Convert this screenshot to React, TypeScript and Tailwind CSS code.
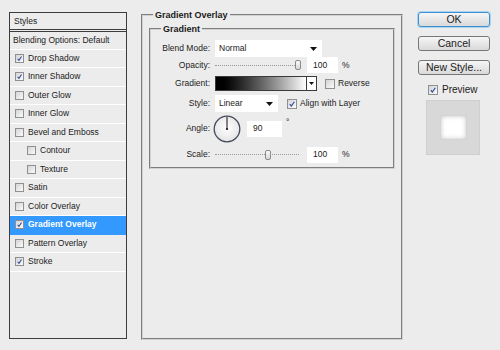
import React from 'react'

// Photoshop "Layer Style" dialog — Gradient Overlay page.
const STYLE_ROWS: { label: string; checked: boolean; indent?: boolean; active?: boolean }[] = [
  { label: 'Drop Shadow', checked: true },
  { label: 'Inner Shadow', checked: true },
  { label: 'Outer Glow', checked: false },
  { label: 'Inner Glow', checked: false },
  { label: 'Bevel and Emboss', checked: false },
  { label: 'Contour', checked: false, indent: true },
  { label: 'Texture', checked: false, indent: true },
  { label: 'Satin', checked: false },
  { label: 'Color Overlay', checked: false },
  { label: 'Gradient Overlay', checked: true, active: true },
  { label: 'Pattern Overlay', checked: false },
  { label: 'Stroke', checked: true },
]

function Checkbox({ checked, className = '' }: { checked: boolean; className?: string }) {
  return (
    <span
      className={`inline-flex shrink-0 items-center justify-center border border-[#8f9090] bg-gradient-to-br from-[#d4d4d6] to-[#fbfbfb] ${className}`}
    >
      {checked && (
        <svg viewBox="0 0 10 10" className="h-full w-full">
          <path d="M2.3 5.3 L4.2 7.6 L7.9 2.2" stroke="#2b4a9c" strokeWidth="1.5" fill="none" />
        </svg>
      )}
    </span>
  )
}

function Arrow() {
  return (
    <svg width="7" height="4" viewBox="0 0 7 4">
      <path d="M0 0 H7 L3.5 4 Z" fill="#111" />
    </svg>
  )
}

function Select({ value, className = '' }: { value: string; className?: string }) {
  return (
    <div className={`flex h-[17px] items-center justify-between bg-white pl-[4px] pr-[5px] ${className}`}>
      <span>{value}</span>
      <Arrow />
    </div>
  )
}

function Slider({ pos }: { pos: number }) {
  return (
    <div className="relative flex h-[12px] w-[84px] items-center">
      <div className="h-px w-full border-t border-dotted border-[#9a9a9a]" />
      <div
        className="absolute top-[1px] h-[10px] w-[6px] rounded-[2px] border border-[#8a8a8a] bg-gradient-to-b from-[#fafafa] to-[#d6d6d6]"
        style={{ left: pos }}
      />
    </div>
  )
}

function NumField({ value, className = '' }: { value: string; className?: string }) {
  return (
    <div className={`flex h-[16px] items-center bg-white pl-[6px] ${className}`}>{value}</div>
  )
}

function StyleList() {
  return (
    <div className="ml-[9px] mt-[12px] flex h-[327px] w-[118px] flex-col border border-[#3d3d3d] bg-[#ececec]">
      <div className="flex h-[19px] shrink-0 items-center border-b-[3px] border-double border-[#3d3d3d] pl-[4px]">
        Styles
      </div>
      <div className="flex h-[17.5px] shrink-0 items-center border-b border-white pl-[3px]">
        Blending Options: Default
      </div>
      {STYLE_ROWS.map(r => (
        <div
          key={r.label}
          className={`flex h-[18.5px] shrink-0 items-center gap-[4px] border-b ${
            r.active ? 'border-[#3399ff] bg-[#3399ff] font-bold text-white' : 'border-white'
          } ${r.indent ? 'pl-[17px]' : 'pl-[5px]'}`}
        >
          <Checkbox checked={r.checked} className="h-[9px] w-[9px]" />
          <span>{r.label}</span>
        </div>
      ))}
    </div>
  )
}

function Row({ label, className = '', children }: { label: string; className?: string; children: React.ReactNode }) {
  return (
    <div className={`flex items-center ${className}`}>
      <div className="w-[59px] shrink-0 text-right">{label}</div>
      <div className="ml-[5px] flex items-center">{children}</div>
    </div>
  )
}

function GradientPanel() {
  return (
    <fieldset className="ml-[14px] mt-[10px] h-[330px] w-[262px] border-2 border-[#d2d2d2] px-[6px] [border-style:groove]">
      <legend className="ml-[4px] px-[2px] text-[9px] font-bold leading-[10px]">Gradient Overlay</legend>
      <fieldset className="mt-[4px] h-[145px] border-2 border-[#d2d2d2] [border-style:groove]">
        <legend className="ml-[10px] px-[2px] text-[9px] font-bold leading-[10px]">Gradient</legend>

        <Row label="Blend Mode:" className="mt-[6px] h-[17px]">
          <Select value="Normal" className="w-[107px]" />
        </Row>

        <Row label="Opacity:" className="h-[16px]">
          <Slider pos={80} />
          <NumField value="100" className="ml-[8px] w-[31px]" />
          <span className="ml-[4px]">%</span>
        </Row>

        <Row label="Gradient:" className="mt-[3px] h-[15px]">
          <div className="flex h-[15px] w-[102px] border border-[#3a3a3a]">
            <div className="h-full flex-1 bg-gradient-to-r from-black to-white" />
            <div className="flex w-[10px] items-center justify-center border-l border-[#3a3a3a] bg-white">
              <svg width="5" height="3" viewBox="0 0 5 3">
                <path d="M0 0 H5 L2.5 3 Z" fill="#111" />
              </svg>
            </div>
          </div>
          <Checkbox checked={false} className="ml-[8px] h-[10px] w-[10px]" />
          <span className="ml-[3px]">Reverse</span>
        </Row>

        <Row label="Style:" className="mt-[4px] h-[17px]">
          <Select value="Linear" className="w-[63px]" />
          <Checkbox checked className="ml-[9px] h-[10px] w-[10px]" />
          <span className="ml-[3px]">Align with Layer</span>
        </Row>

        <Row label="Angle:" className="mt-[3px] h-[27px]">
          <svg width="28" height="28" viewBox="0 0 28 28" className="-ml-[2px]">
            <defs>
              <radialGradient id="dial" cx="50%" cy="45%" r="60%">
                <stop offset="0%" stopColor="#ffffff" />
                <stop offset="100%" stopColor="#e2e2e2" />
              </radialGradient>
            </defs>
            <circle cx="14" cy="14" r="12.8" fill="url(#dial)" stroke="#434a5a" strokeWidth="1.3" />
            <line x1="14" y1="14" x2="14" y2="2" stroke="#111" strokeWidth="1" />
            <circle cx="14" cy="14" r="1.1" fill="#111" />
          </svg>
          <NumField value="90" className="ml-[6px] w-[35px]" />
          <span className="ml-[4px] -mt-[12px]">°</span>
        </Row>

        <Row label="Scale:" className="mt-[4px] h-[17px]">
          <Slider pos={50} />
          <NumField value="100" className="ml-[8px] w-[31px]" />
          <span className="ml-[4px]">%</span>
        </Row>
      </fieldset>
    </fieldset>
  )
}

function Button({ children, primary }: { children: React.ReactNode; primary?: boolean }) {
  return (
    <button
      className={`flex h-[15px] w-[72px] items-center justify-center rounded-[3px] border bg-gradient-to-b from-[#f6f6f6] to-[#d9d9d9] text-[10.5px] leading-none ${
        primary ? 'border-[#3d8fce] shadow-[0_0_0_1px_#a9d5f3]' : 'border-[#777]'
      }`}
    >
      {children}
    </button>
  )
}

function SideButtons() {
  return (
    <div className="ml-[15px] mt-[12px] flex w-[72px] flex-col">
      <Button primary>OK</Button>
      <div className="mt-[9px]">
        <Button>Cancel</Button>
      </div>
      <div className="mt-[9px]">
        <Button>New Style...</Button>
      </div>
      <div className="ml-[10px] mt-[7px] flex items-center gap-[4px] text-[10px]">
        <Checkbox checked className="h-[10px] w-[10px]" />
        <span>Preview</span>
      </div>
      <div className="ml-[8px] mt-[3px] flex h-[55px] w-[54px] items-center justify-center border border-[#cfcfcf] bg-[#d8d8d8]">
        <div className="h-[25px] w-[27px] border border-[#d4d4d4] bg-white shadow-[inset_0_0_5px_#c4c4c4]" />
      </div>
    </div>
  )
}

export default function App() {
  return (
    <div className="flex h-[350px] w-[500px] items-start overflow-hidden bg-[#ececec] font-['Liberation_Sans',Arial,sans-serif] text-[8.5px] text-[#1b1b1b]">
      <StyleList />
      <GradientPanel />
      <SideButtons />
    </div>
  )
}
